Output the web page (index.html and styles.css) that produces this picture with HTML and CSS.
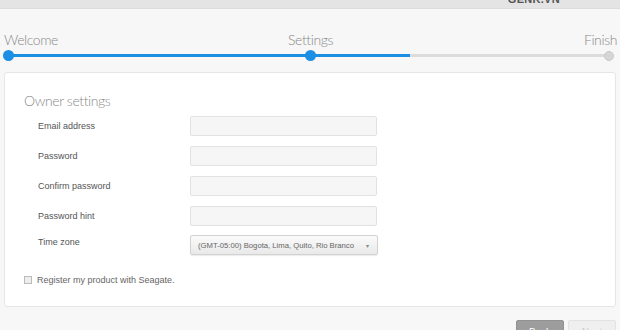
FILE: index.html
```html
<!DOCTYPE html>
<html lang="en">
<head>
  <meta charset="UTF-8">
  <title>Setup - Owner settings</title>
  <link rel="stylesheet" href="styles.css">
</head>
<body>

  <div class="topbar"><span class="mark">GENK.VN</span></div>

  <div class="steps">
    <div class="step-labels">
      <span class="lbl-first">Welcome</span>
      <span class="lbl-mid">Settings</span>
      <span class="lbl-last">Finish</span>
    </div>
    <div class="track">
      <div class="track-fill" style="width: 66.8%"></div>
      <span class="dot dot-first"></span>
      <span class="dot dot-mid"></span>
      <span class="dot dot-last"></span>
    </div>
  </div>

  <section class="card">
    <h2>Owner settings</h2>
    <div class="form">
      <label>Email address</label>
      <input type="text">
      <label>Password</label>
      <input type="password">
      <label>Confirm password</label>
      <input type="password">
      <label>Password hint</label>
      <input type="text">
      <label class="tz-label">Time zone</label>
      <div class="select">
        <span>(GMT-05:00) Bogota, Lima, Quito, Rio Branco</span>
        <span class="caret">&#9662;</span>
      </div>
    </div>
    <div class="register">
      <span class="check"></span>
      <span>Register my product with Seagate.</span>
    </div>
  </section>

  <footer>
    <button class="btn btn-back">Back</button>
    <button class="btn btn-next">Next</button>
  </footer>

</body>
</html>
```

FILE: styles.css
```css
    body {
      font-family: "Liberation Sans", Arial, sans-serif;
      margin: 0;
      padding: 0;
      background-color: #f7f7f7;
      overflow: hidden;
    }
    .topbar {
      height: 8px;
      background-color: #e4e4e4;
      border-bottom: 1px solid #dcdcdc;
      overflow: hidden;
      display: flex;
      justify-content: flex-end;
      padding-right: 60px;
    }
    .mark {
      font-size: 11px;
      font-weight: bold;
      letter-spacing: 0.3px;
      color: #555;
      line-height: 11px;
      margin-top: -6px;
    }
    .steps {
      padding: 0 3px 0 4px;
      margin-top: 22px;
    }
    .step-labels {
      display: grid;
      grid-template-columns: 1fr auto 1fr;
      font-family: Lato, "Open Sans", sans-serif;
      font-weight: 300;
      font-size: 14px;
      letter-spacing: -0.4px;
      line-height: 18px;
      color: #888;
    }
    .lbl-first { justify-self: start; }
    .lbl-mid { justify-self: center; }
    .lbl-last { justify-self: end; }
    .track {
      position: relative;
      height: 3px;
      background-color: #dcdcdc;
      margin: 5px 7px 0 4px;
    }
    .track-fill {
      height: 3px;
      background-color: #1a8fe3;
    }
    .dot {
      position: absolute;
      top: -4px;
      width: 11px;
      height: 11px;
      border-radius: 50%;
      background-color: #1a8fe3;
    }
    .dot-first { left: -5px; }
    .dot-mid { left: 297px; }
    .dot-last {
      right: -4px;
      top: -3px;
      width: 8px;
      height: 8px;
      background-color: #d6d6d6;
      border: 1px solid #c8c8c8;
    }
    .card {
      margin: 15px 4px 0;
      background-color: #fff;
      border: 1px solid #e6e6e6;
      border-radius: 3px;
      padding: 19px 20px 18px 19px;
      height: 196px;
    }
    .card h2 {
      margin: 0 0 6px;
      font-family: Lato, "Open Sans", sans-serif;
      font-weight: 300;
      font-size: 14px;
      letter-spacing: -0.4px;
      line-height: 18px;
      color: #8a8a8a;
    }
    .form {
      display: grid;
      grid-template-columns: 152px 188px;
      row-gap: 10px;
      margin-left: 14px;
      align-items: center;
      font-size: 9px;
      color: #555;
    }
    .form label {
      font-size: 9px;
    }
    .form input {
      box-sizing: border-box;
      width: 187px;
      height: 20px;
      margin: 0;
      background-color: #f6f6f6;
      border: 1px solid #e2e2e2;
      border-radius: 2px;
    }
    .tz-label {
      align-self: start;
      margin-top: 1px;
    }
    .select {
      box-sizing: border-box;
      height: 20px;
      margin-top: -1px;
      display: flex;
      align-items: center;
      justify-content: space-between;
      padding: 0 8px 0 7px;
      font-size: 7.7px;
      color: #666;
      background: linear-gradient(#fbfbfb, #e9e9e9);
      border: 1px solid #d2d2d2;
      border-radius: 2px;
      box-shadow: 0 1px 1px rgba(0, 0, 0, 0.08);
    }
    .caret {
      font-size: 6px;
      color: #888;
    }
    .register {
      display: flex;
      align-items: center;
      gap: 5px;
      margin-top: 20px;
      font-size: 9px;
      color: #666;
    }
    .check {
      width: 6px;
      height: 6px;
      border: 1px solid #bbb;
      background-color: #eee;
    }
    footer {
      display: flex;
      justify-content: flex-end;
      gap: 4px;
      margin-top: 13px;
      padding-right: 4px;
    }
    .btn {
      width: 48px;
      height: 24px;
      border-radius: 2px;
      font-family: "Liberation Sans", Arial, sans-serif;
      font-size: 10px;
      padding: 0;
    }
    .btn-back {
      background-color: #9d9d9d;
      border: 1px solid #929292;
      color: #fff;
    }
    .btn-next {
      background-color: #efefef;
      border: 1px solid #e2e2e2;
      color: #ccc;
    }
```
